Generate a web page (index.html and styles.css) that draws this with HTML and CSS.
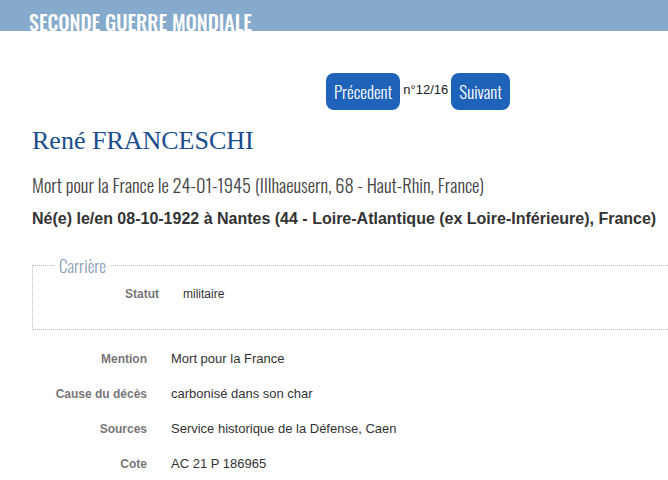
FILE: index.html
```html
<!DOCTYPE html>
<html>
  <head>
    <title>René FRANCESCHI</title>
    <meta charset="UTF-8" />
    <link rel="stylesheet" href="styles.css">
  </head>

  <body>
    <div class="banner">
      <span class="banner_title">SECONDE GUERRE MONDIALE</span>
    </div>
    <div class="container">
      <div class="pager">
        <a class="pager_btn" href="#">Précedent</a>
        <span class="pager_count">n°12/16</span>
        <a class="pager_btn" href="#">Suivant</a>
      </div>
      <h1 class="name">René FRANCESCHI</h1>
      <p class="death">Mort pour la France le 24-01-1945 (Illhaeusern, 68 - Haut-Rhin, France)</p>
      <p class="birth">Né(e) le/en 08-10-1922 à Nantes (44 - Loire-Atlantique (ex Loire-Inférieure), France)</p>

      <fieldset class="career">
        <legend>Carrière</legend>
        <div class="row">
          <div class="label">Statut</div>
          <div class="value">militaire</div>
        </div>
      </fieldset>

      <div class="details">
        <div class="row">
          <div class="label">Mention</div>
          <div class="value">Mort pour la France</div>
        </div>
        <div class="row">
          <div class="label">Cause du décès</div>
          <div class="value">carbonisé dans son char</div>
        </div>
        <div class="row">
          <div class="label">Sources</div>
          <div class="value">Service historique de la Défense, Caen</div>
        </div>
        <div class="row">
          <div class="label">Cote</div>
          <div class="value">AC 21 P 186965</div>
        </div>
      </div>
    </div>
  </body>
</html>
```

FILE: styles.css
```css
html {
  overflow: hidden;
}
body {
  margin: 0;
  font-family: "Liberation Sans", Arial, sans-serif;
  font-size: 12px;
  color: #333;
  background: #fff;
}
.banner {
  height: 31px;
  background: #85aacb;
  padding-left: 29px;
  overflow: hidden;
}
.banner_title {
  display: block;
  font-family: Oswald, "Roboto Condensed", sans-serif;
  font-weight: 500;
  font-size: 20px;
  line-height: 44px;
  color: #fff;
}
.container {
  width: 772px;
  padding-left: 32px;
}
.pager {
  display: flex;
  justify-content: center;
  align-items: flex-start;
  gap: 3px;
  margin-top: 42px;
}
.pager_btn {
  display: block;
  height: 37px;
  line-height: 37px;
  padding: 0 8px;
  background: #1f62b9;
  border-radius: 8px;
  color: #fff;
  text-decoration: none;
  font-family: Oswald, "Roboto Condensed", sans-serif;
  font-weight: 300;
  font-size: 17px;
}
.pager_count {
  padding-top: 9px;
  font-size: 13px;
  color: #222;
}
.name {
  margin: 16px 0 0;
  font-family: "Liberation Serif", serif;
  font-weight: normal;
  font-size: 26px;
  line-height: 30px;
  color: #1b4c8d;
}
.death {
  margin: 17px 0 0;
  font-family: Oswald, "Roboto Condensed", sans-serif;
  font-weight: 300;
  font-size: 18.5px;
  line-height: 24px;
  color: #444;
}
.birth {
  margin: 12px 0 0;
  font-size: 16px;
  font-weight: bold;
  line-height: 20px;
  color: #333;
}
.career {
  margin: 24px 0 0;
  padding: 0 11px 28px;
  border: 1px dotted #bbb;
}
.career legend {
  margin-left: 11px;
  padding: 0 4px;
  font-family: Oswald, "Roboto Condensed", sans-serif;
  font-weight: 300;
  font-size: 17px;
  color: #8ca2b7;
}
.details {
  margin-top: 19px;
}
.row {
  display: grid;
  grid-template-columns: 115px 1fr;
  column-gap: 24px;
  align-items: baseline;
  height: 35px;
}
.career .row {
  height: auto;
  margin-top: 6px;
}
.label {
  text-align: right;
  font-weight: bold;
  color: #777;
  padding-top: 3px;
}
.value {
  font-size: 13px;
  color: #333;
}
.career .value {
  font-size: 12px;
}
```
